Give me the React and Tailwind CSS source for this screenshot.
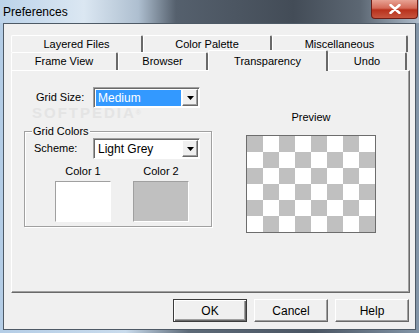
import React from "react";

const FONT = { fontFamily: '"Liberation Sans", Arial, sans-serif' };

function Tab({ label, width, selected }) {
  if (selected) {
    return (
      <div
        className="relative z-10 -mb-[1px] flex h-[21px] items-start justify-center rounded-t-[2px] border-l border-t border-r-2 border-l-white border-t-white border-r-[#696969] bg-[#f0f0f0] pt-[2px] text-[11px] text-black"
        style={{ width }}
      >
        {label}
      </div>
    );
  }
  return (
    <div
      className="flex h-full items-center justify-center rounded-t-[2px] border-l border-t border-r-2 border-l-white border-t-white border-r-[#696969] bg-[#f0f0f0] text-[11px] text-black"
      style={{ width }}
    >
      {label}
    </div>
  );
}

function DropArrow() {
  return (
    <div className="flex h-full w-[16px] items-center justify-center border border-t-white border-l-white border-r-[#696969] border-b-[#696969] bg-[#f0f0f0] shadow-[inset_-1px_-1px_0_#a0a0a0]">
      <svg width="7" height="4" viewBox="0 0 7 4">
        <path d="M0 0h7L3.5 4z" fill="#000" />
      </svg>
    </div>
  );
}

function Select({ value, highlighted }) {
  return (
    <div className="flex h-[21px] w-[107px] items-stretch border border-t-[#a0a0a0] border-l-[#a0a0a0] border-b-white border-r-white bg-white p-[1px] shadow-[inset_1px_1px_0_#696969]">
      <div className="flex flex-1 items-center pl-[1px] pr-[1px] pt-[1px]">
        <div
          className={
            highlighted
              ? "flex h-full w-full items-center bg-[#3399ff] px-[2px] text-[12px] text-white"
              : "flex h-full w-full items-center px-[2px] text-[12px] text-black"
          }
        >
          {value}
        </div>
      </div>
      <DropArrow />
    </div>
  );
}

function Checker() {
  const rows = [0, 1, 2, 3, 4, 5];
  const cols = [0, 1, 2, 3, 4, 5, 6, 7];
  return (
    <div className="border border-[#6d6d6d]">
      {rows.map((r) => (
        <div key={r} className="flex">
          {cols.map((c) => (
            <div
              key={c}
              className={(r + c) % 2 === 0 ? "h-[16px] w-[16px] bg-[#c0c0c0]" : "h-[16px] w-[16px] bg-white"}
            />
          ))}
        </div>
      ))}
    </div>
  );
}

function Button({ label, isDefault }) {
  return (
    <div
      className={
        isDefault
          ? "flex h-[23px] w-[74px] items-center justify-center border border-[#3c3c3c] bg-[#f0f0f0] text-[12px] text-black shadow-[inset_1px_1px_0_#fff,inset_-1px_-1px_0_#696969,inset_-2px_-2px_0_#a0a0a0]"
          : "flex h-[23px] w-[74px] items-center justify-center border border-t-white border-l-white border-r-[#696969] border-b-[#696969] bg-[#f0f0f0] text-[12px] text-black shadow-[inset_-1px_-1px_0_#a0a0a0]"
      }
    >
      {label}
    </div>
  );
}

export default function App() {
  return (
    <div
      className="relative h-[333px] w-[419px] overflow-hidden bg-[linear-gradient(90deg,#b4cde6_0%,#c9dbec_30%,#5d6a78_45%,#4a5563_75%,#8496a8_100%)]"
      style={FONT}
    >
      {/* title bar */}
      <div className="flex h-[23px] items-start justify-between bg-[linear-gradient(90deg,#bcd3ea_0%,#dbe7f2_20%,#aebfd0_33%,#55606d_42%,#434c57_70%,#5c6773_86%,#aebccb_100%)]">
        <div className="pl-[3px] pt-[3px] text-[12px] text-black">Preferences</div>
        <div className="mr-[1px] flex h-[19px] w-[47px] items-center justify-center rounded-b-[4px] border border-t-0 border-[#6e1d16] bg-[linear-gradient(180deg,#e8a394_0%,#d46a58_45%,#b8311c_55%,#c7553f_100%)]">
          <svg width="12" height="10" viewBox="0 0 12 10">
            <path d="M1.5 1l9 8M10.5 1l-9 8" stroke="#fff" strokeWidth="2.4" strokeLinecap="round" />
          </svg>
        </div>
      </div>

      {/* client area */}
      <div className="relative mx-[3px] h-[307px] border border-[#4e5a66] bg-[#f0f0f0]">
        {/* faint watermark, painted under the dialog content */}
        <div className="pointer-events-none absolute left-[28px] top-[81px] text-[15px] font-bold leading-[15px] tracking-[2px] text-[#e4e4e4]">
          SOFTPEDIA<span className="align-top text-[7px]">®</span>
        </div>

        <div className="relative ml-[7px] mt-[11px] w-[399px]">
          <div className="flex h-[17px]">
            <Tab label="Layered Files" width={132} />
            <Tab label="Color Palette" width={129} />
            <Tab label="Miscellaneous" width={136} />
          </div>
          <div className="flex h-[18px] items-end">
            <Tab label="Frame View" width={107} />
            <Tab label="Browser" width={90} />
            <Tab label="Transparency" width={120} selected />
            <Tab label="Undo" width={79} />
          </div>
          <div className="flex h-[223px] border border-t-white border-l-white border-r-[#696969] border-b-[#696969] shadow-[inset_-1px_-1px_0_#a0a0a0]">
            {/* left column */}
            <div className="pl-[12px] pt-[16px]">
              <div className="flex items-center">
                <div className="w-[69px] pl-[12px] text-[11px] text-black">Grid Size:</div>
                <Select value="Medium" highlighted />
              </div>
              <div className="relative mt-[23px] h-[96px] w-[188px] border border-[#a0a0a0] shadow-[inset_1px_1px_0_#fff,1px_1px_0_#fff]">
                <div className="absolute -top-[8px] left-[7px] bg-[#f0f0f0] px-[1px] text-[11px] leading-[14px] text-black">Grid Colors</div>
                <div className="flex items-center pt-[6px]">
                  <div className="w-[68px] pl-[9px] text-[11px] text-black">Scheme:</div>
                  <Select value="Light Grey" />
                </div>
                <div className="mt-[6px] flex gap-[22px] pl-[30px]">
                  <div className="flex flex-col items-center">
                    <div className="text-[11px] leading-[13px] text-black">Color 1</div>
                    <div className="mt-[3px] h-[41px] w-[56px] border border-t-[#a0a0a0] border-l-[#a0a0a0] border-b-white border-r-white bg-white" />
                  </div>
                  <div className="flex flex-col items-center">
                    <div className="text-[11px] leading-[13px] text-black">Color 2</div>
                    <div className="mt-[3px] h-[41px] w-[56px] border border-t-[#a0a0a0] border-l-[#a0a0a0] border-b-white border-r-white bg-[#c0c0c0]" />
                  </div>
                </div>
              </div>
            </div>
            {/* right column */}
            <div className="ml-[34px] flex flex-col items-center pt-[38px]">
              <div className="text-[11px] text-black">Preview</div>
              <div className="mt-[9px]">
                <Checker />
              </div>
            </div>
          </div>
        </div>
        <div className="mt-[6px] flex justify-end gap-[7px] pr-[6px]">
          <Button label="OK" isDefault />
          <Button label="Cancel" />
          <Button label="Help" />
        </div>
      </div>
    </div>
  );
}
